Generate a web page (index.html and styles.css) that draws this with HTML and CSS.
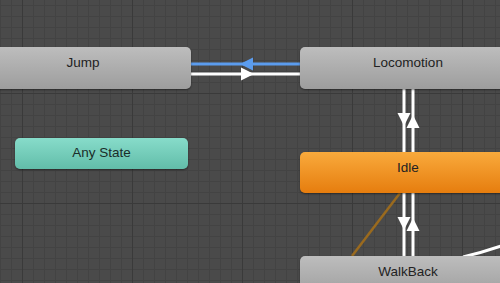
FILE: index.html
```html
<!DOCTYPE html>
<html>
<head>
    <title>Animator</title>
    <link rel="stylesheet" href="styles.css">
</head>
<body>
    <div class="graph">
        <svg class="edges" width="500" height="283" viewBox="0 0 500 283">
            <!-- Locomotion -> Jump -->
            <line x1="191" y1="64" x2="300" y2="64" class="edge-blue"/>
            <polygon points="240,64 253,57.5 253,70.5" fill="#5b9cee"/>
            <!-- Jump -> Locomotion -->
            <line x1="191" y1="74" x2="300" y2="74" class="edge"/>
            <polygon points="254,74 241,67.5 241,80.5" fill="#fff"/>

            <!-- Locomotion <-> Idle -->
            <line x1="404" y1="89" x2="404" y2="152" class="edge"/>
            <polygon points="397.5,113 410.5,113 404,126" fill="#fff"/>
            <line x1="413" y1="89" x2="413" y2="152" class="edge"/>
            <polygon points="406.5,128 419.5,128 413,115" fill="#fff"/>

            <!-- Idle <-> WalkBack -->
            <line x1="404" y1="193" x2="404" y2="256" class="edge"/>
            <polygon points="397.5,217 410.5,217 404,230" fill="#fff"/>
            <line x1="413" y1="193" x2="413" y2="256" class="edge"/>
            <polygon points="406.5,231 419.5,231 413,218" fill="#fff"/>

            <line x1="352" y1="256" x2="400" y2="193" class="edge-dim"/>
            <path d="M463,257 Q484,252 504,245" class="edge" fill="none"/>
        </svg>

        <div class="node node-gray" style="left:-25px; top:47px; width:216px;">Jump</div>
        <div class="node node-gray" style="left:300px; top:47px; width:216px;">Locomotion</div>
        <div class="node node-any" style="left:15px; top:138px; width:173px;">Any State</div>
        <div class="node node-default" style="left:300px; top:152px; width:216px;">Idle</div>
        <div class="node node-gray" style="left:300px; top:256px; width:216px;">WalkBack</div>
    </div>
</body>
</html>
```

FILE: styles.css
```css
body { margin: 0; font-family: "Liberation Sans", Arial, sans-serif; }

.graph {
    position: relative;
    width: 500px;
    height: 283px;
    overflow: hidden;
    background-color: #4a4a4a;
    background-image:
        linear-gradient(to right, #3a3a3a 1px, transparent 1px),
        linear-gradient(to bottom, #3a3a3a 1px, transparent 1px),
        linear-gradient(to right, #434343 1px, transparent 1px),
        linear-gradient(to bottom, #434343 1px, transparent 1px);
    background-size: 110px 110px, 110px 110px, 11px 11px, 11px 11px;
    background-position: 22px 0, 0 93px, 0 0, 0 5px;
}

.edges { position: absolute; left: 0; top: 0; }
.edge { stroke: #fff; stroke-width: 3; }
.edge-blue { stroke: #5b9cee; stroke-width: 3; }
.edge-dim { stroke: #9a6a1e; stroke-width: 2.5; }

.node {
    position: absolute;
    box-sizing: border-box;
    height: 42px;
    padding-top: 7px;
    border-radius: 5px;
    text-align: center;
    font-size: 13.5px;
    line-height: 18px;
    color: #222;
    box-shadow: 0 1px 2px rgba(0, 0, 0, 0.45);
}

.node-gray { background: linear-gradient(#bdbdbd, #9d9d9d); }
.node-default { height: 41px; background: linear-gradient(#f9aa3c, #e67d0e); }
.node-any {
    height: 31px;
    padding-top: 6px;
    background: linear-gradient(#87dcca, #62bda9);
    color: #1a2d29;
}
```
